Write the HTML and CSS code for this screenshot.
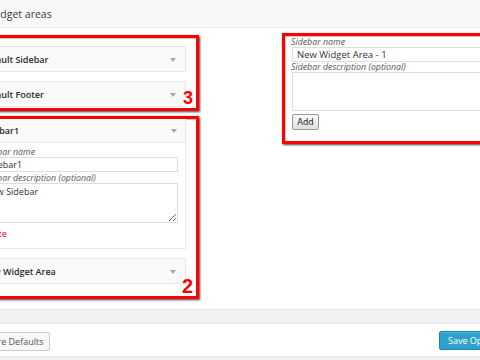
FILE: index.html
```html
<!DOCTYPE html>
<html>
<head>
<meta charset="utf-8">
<link rel="stylesheet" href="styles.css">
</head>
<body>
<div class="page">
  <div class="header"><h2 class="title">Widget areas</h2></div>
  <div class="main">
    <div class="left-col">
      <div class="mark mark-3">
        <div class="item"><span>Default Sidebar</span><span class="arrow"></span></div>
        <div class="item"><span>Default Footer</span><span class="arrow"></span></div>
        <span class="num num-3">3</span>
      </div>
      <div class="mark mark-2">
        <div class="widget">
          <div class="widget-head"><span>Sidebar1</span><span class="arrow"></span></div>
          <div class="widget-body">
            <label class="lbl">Sidebar name</label>
            <input class="field" type="text" value="Sidebar1">
            <label class="lbl">Sidebar description (optional)</label>
            <textarea class="area">New Sidebar</textarea>
            <a class="delete">Delete</a>
          </div>
        </div>
        <div class="item"><span>New Widget Area</span><span class="arrow"></span></div>
        <span class="num num-2">2</span>
      </div>
    </div>
    <div class="mark mark-1">
      <label class="lbl">Sidebar name</label>
      <input class="field field-r" type="text" value="New Widget Area - 1">
      <label class="lbl">Sidebar description (optional)</label>
      <textarea class="area area-r"></textarea>
      <button class="add">Add</button>
    </div>
  </div>
  <div class="band"></div>
  <div class="footer">
    <button class="btn restore">Restore Defaults</button>
    <button class="btn save">Save Options</button>
  </div>
  <div class="bottom"></div>
</div>
</body>
</html>
```
FILE: styles.css
```css
html, body {
  margin: 0;
  padding: 0;
  background: #fff;
  overflow: hidden;
  width: 480px;
  height: 360px;
}
.page {
  font-family: "Open Sans", "Liberation Sans", sans-serif;
  color: #333;
  width: 480px;
  height: 360px;
  overflow: hidden;
}
.header {
  height: 27px;
  background: #f8f8f8;
  border-bottom: 1px solid #ececec;
  display: flex;
  align-items: center;
}
.title {
  margin: 0 0 0 -12px;
  font-size: 10.5px;
  font-weight: 400;
  color: #3a3a3a;
}
.main {
  display: flex;
  align-items: flex-start;
  gap: 83px;
  margin-left: -48px;
  padding-top: 5px;
  height: 276px;
}
.left-col {
  width: 247px;
  margin-top: 2px;
  display: flex;
  flex-direction: column;
  gap: 5px;
  flex: none;
}
.mark {
  position: relative;
  border: 3px solid #f00;
  box-shadow: 1px 1px 2px rgba(0,0,0,.75), inset 1px 1px 1px rgba(0,0,0,.25);
  box-sizing: border-box;
}
.mark-3 {
  padding: 8px 10px 1px;
  display: flex;
  flex-direction: column;
  gap: 9px;
}
.mark-2 {
  padding: 0 10px 12px;
  display: flex;
  flex-direction: column;
  gap: 9px;
}
.item {
  height: 26px;
  box-sizing: border-box;
  border: 1px solid #e8e8e8;
  background: #fafafa;
  display: flex;
  align-items: center;
  justify-content: space-between;
  padding: 0 9px 0 15px;
  font-size: 9px;
  font-weight: 600;
  color: #2a2a2a;
}
.arrow {
  width: 0;
  height: 0;
  border-left: 3px solid transparent;
  border-right: 3px solid transparent;
  border-top: 4px solid #a8a8a8;
  margin-top: 1px;
}
.widget {
  border: 1px solid #e8e8e8;
  border-top: none;
}
.widget-head {
  height: 24px;
  box-sizing: border-box;
  background: #fafafa;
  border-bottom: 1px solid #e8e8e8;
  display: flex;
  align-items: center;
  justify-content: space-between;
  padding: 0 8px 0 15px;
  font-size: 9px;
  font-weight: 600;
  color: #2a2a2a;
}
.widget-body {
  height: 105px;
  box-sizing: border-box;
  padding: 5px 7px 0 15px;
  display: flex;
  flex-direction: column;
  background: #fff;
}
.lbl {
  display: block;
  font-size: 8.8px;
  font-style: italic;
  line-height: 9px;
  color: #555;
  white-space: nowrap;
}
.field {
  display: block;
  height: 15px;
  box-sizing: border-box;
  border: 1px solid #ddd;
  padding: 0 3px;
  margin: 0 0 1px 0;
  font-family: "Open Sans", sans-serif;
  font-size: 9px;
  color: #333;
  outline: none;
  background: #fff;
}
.widget-body .field {
  width: 100%;
  margin-bottom: 2px;
}
.area {
  display: block;
  height: 40px;
  box-sizing: border-box;
  border: 1px solid #ddd;
  padding: 1px 3px;
  margin: 0;
  font-family: "Open Sans", sans-serif;
  font-size: 9px;
  color: #333;
  resize: both;
  outline: none;
}
.widget-body .area {
  width: 100%;
}
.delete {
  margin-top: 5px;
  font-size: 8.5px;
  color: #c00;
}
.num {
  position: absolute;
  right: 3px;
  font-family: "Liberation Sans", Arial, sans-serif;
  font-weight: 700;
  color: #f00;
  line-height: 1;
}
.num-3 {
  bottom: 1px;
  font-size: 18px;
}
.num-2 {
  bottom: 0;
  font-size: 20px;
}
.mark-1 {
  width: 230px;
  flex: none;
  padding: 2px 7px 11px 7px;
  display: flex;
  flex-direction: column;
  align-items: flex-start;
}
.mark-1 .lbl {
  margin-left: -1px;
}
.field-r {
  width: 100%;
  height: 15px;
  font-size: 9.5px;
  padding: 0 4px;
}
.area-r {
  width: 100%;
  height: 39px;
}
.add {
  margin-top: 3px;
  height: 16px;
  width: 27px;
  padding: 0;
  font-family: "DejaVu Sans", Verdana, sans-serif;
  font-size: 8.5px;
  color: #222;
  background: linear-gradient(#fafafa, #dedede);
  border: 1px solid #999;
  border-radius: 2px;
}
.band {
  height: 13px;
  background: #f1f1f1;
  border-top: 1px solid #e6e6e6;
  border-bottom: 1px solid #e6e6e6;
}
.footer {
  height: 32px;
  display: flex;
  align-items: center;
  justify-content: space-between;
  margin: 0 -32px 0 -34px;
  background: #fff;
}
.btn {
  font-family: "Open Sans", sans-serif;
  font-size: 9px;
  border-radius: 2px;
  height: 19px;
  padding: 0 7px;
  box-sizing: border-box;
  white-space: nowrap;
}
.restore {
  background: #f7f7f7;
  border: 1px solid #ccc;
  color: #555;
  margin-top: 3px;
  width: 84px;
}
.save {
  background: #2ea2cc;
  border: 1px solid #1a86b0;
  color: #fff;
  width: 73px;
  padding-left: 8px;
  text-align: left;
  box-shadow: inset 0 1px 0 rgba(120,200,230,.5);
}
.bottom {
  height: 10px;
  background: #f1f1f1;
  border-top: 1px solid #e6e6e6;
}
```
